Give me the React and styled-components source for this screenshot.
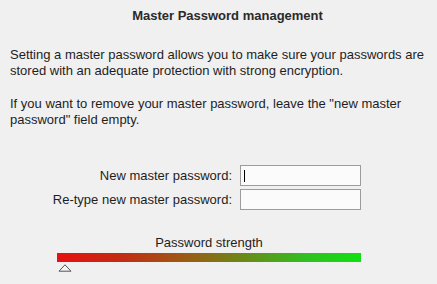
import React from "react";
import styled, { createGlobalStyle } from "styled-components";

const Global = createGlobalStyle`
  html, body {
    margin: 0;
    padding: 0;
    background: #f0f0f0;
  }
  body {
    font-family: "Liberation Sans", Arial, sans-serif;
    color: #1e1e1e;
    font-size: 13px;
  }
`;

const Page = styled.div`
  width: 437px;
  height: 284px;
  overflow: hidden;
  box-sizing: border-box;
  padding: 8px 10px 0 10px;
`;

const Title = styled.h1`
  margin: 0 0 0 18px;
  font-size: 13px;
  font-weight: bold;
  text-align: center;
  line-height: 16px;
  color: #2a2a2a;
`;

const Text = styled.p`
  margin: ${(p) => p.$top}px 0 0 0;
  font-size: 13px;
  line-height: 15.5px;
`;

const Form = styled.div`
  display: grid;
  grid-template-columns: 222px 121px;
  column-gap: 8px;
  row-gap: 3px;
  align-items: center;
  margin-top: 38px;
`;

const Label = styled.label`
  text-align: right;
  font-size: 13px;
`;

const Field = styled.div`
  position: relative;
  height: 21px;
  box-sizing: border-box;
  border: 1px solid #9c9c9c;
  background: #fbfbfb;
`;

const Caret = styled.span`
  position: absolute;
  left: 3px;
  top: 4px;
  width: 1px;
  height: 12px;
  background: #000;
`;

const Strength = styled.div`
  margin: 26px 0 0 47px;
  width: 304px;
`;

const StrengthLabel = styled.div`
  text-align: center;
  font-size: 13px;
  line-height: 14px;
  margin-bottom: 3px;
`;

const Bar = styled.div`
  height: 9px;
  background: linear-gradient(
    to right,
    #e81010 0%,
    #c42a12 20%,
    #9c5a14 42%,
    #6a8a18 62%,
    #30c020 82%,
    #10e010 100%
  );
`;

const Marker = styled.svg`
  display: block;
  margin: 2px 0 0 ${(p) => p.$at}px;
`;

export default function App() {
  return (
    <Page>
      <Global />
      <Title>Master Password management</Title>
      <Text $top={23}>
        Setting a master password allows you to make sure your passwords are
        stored with an adequate protection with strong encryption.
      </Text>
      <Text $top={18}>
        If you want to remove your master password, leave the "new master
        password" field empty.
      </Text>
      <Form>
        <Label>New master password:</Label>
        <Field>
          <Caret />
        </Field>
        <Label>Re-type new master password:</Label>
        <Field />
      </Form>
      <Strength>
        <StrengthLabel>Password strength</StrengthLabel>
        <Bar />
        <Marker $at={1} width="14" height="8" viewBox="0 0 14 8">
          <polygon
            points="7,0.8 13,7.2 1,7.2"
            fill="#f4f4f4"
            stroke="#555"
            strokeWidth="1"
          />
        </Marker>
      </Strength>
    </Page>
  );
}
